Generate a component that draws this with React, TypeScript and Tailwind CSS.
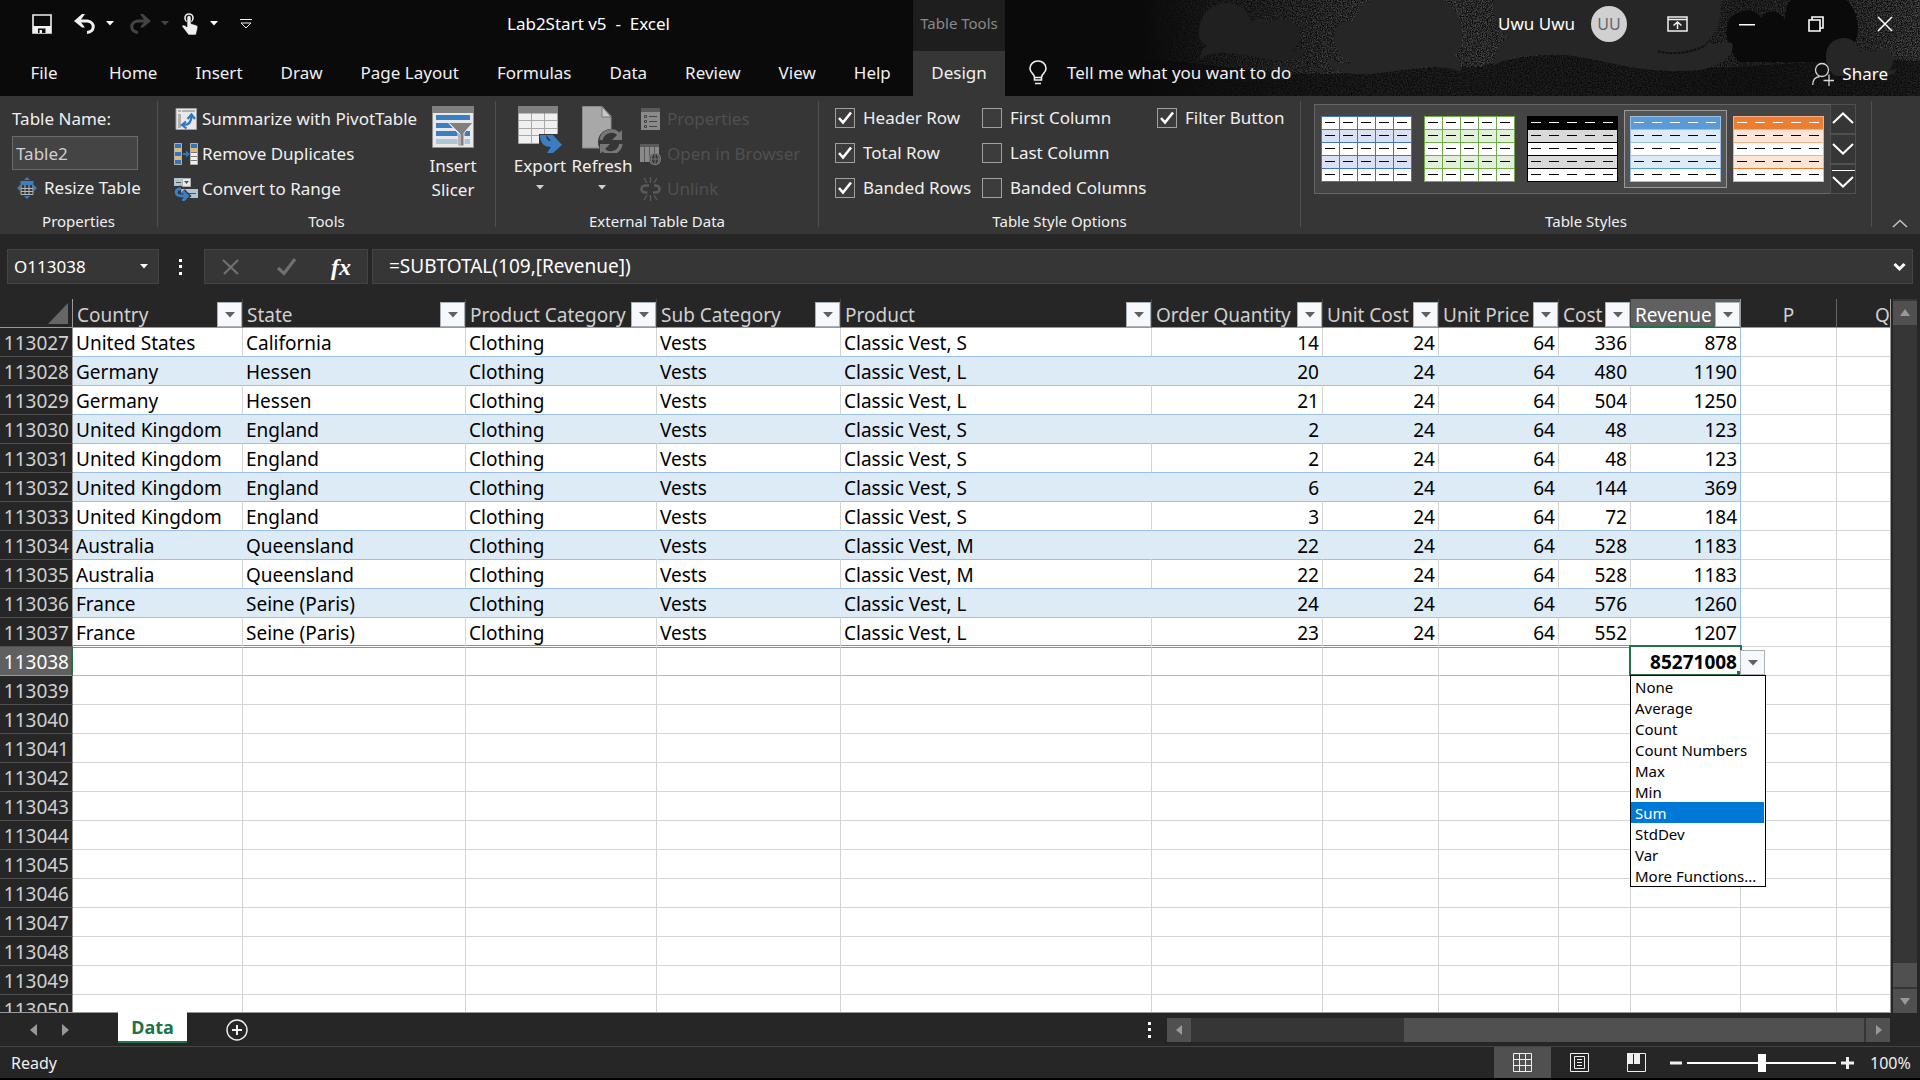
import { useState } from 'react';
import type { ReactNode } from 'react';

const TABS = ['Home', 'Insert', 'Draw', 'Page Layout', 'Formulas', 'Data', 'Review', 'View', 'Help'];

const COLUMNS = [
  { name: 'Country', width: 'w-[170px]' },
  { name: 'State', width: 'w-[223px]' },
  { name: 'Product Category', width: 'w-[191px]' },
  { name: 'Sub Category', width: 'w-[184px]' },
  { name: 'Product', width: 'w-[311px]' },
  { name: 'Order Quantity', width: 'w-[171px]' },
  { name: 'Unit Cost', width: 'w-[116px]' },
  { name: 'Unit Price', width: 'w-[120px]' },
  { name: 'Cost', width: 'w-[72px]' },
  { name: 'Revenue', width: 'w-[110px]' },
];

const FIRST_ROW = 113027;
const TOTAL_ROW = 113038;

const ROWS = [
  ['United States', 'California', 'S', 14, 336, 878],
  ['Germany', 'Hessen', 'L', 20, 480, 1190],
  ['Germany', 'Hessen', 'L', 21, 504, 1250],
  ['United Kingdom', 'England', 'S', 2, 48, 123],
  ['United Kingdom', 'England', 'S', 2, 48, 123],
  ['United Kingdom', 'England', 'S', 6, 144, 369],
  ['United Kingdom', 'England', 'S', 3, 72, 184],
  ['Australia', 'Queensland', 'M', 22, 528, 1183],
  ['Australia', 'Queensland', 'M', 22, 528, 1183],
  ['France', 'Seine (Paris)', 'L', 24, 576, 1260],
  ['France', 'Seine (Paris)', 'L', 23, 552, 1207],
].map(([country, state, size, qty, cost, revenue]) => [
  country, state, 'Clothing', 'Vests', `Classic Vest, ${size}`, qty, 24, 64, cost, revenue,
]);

const EMPTY_ROWS = Array.from({ length: 12 }, (_, i) => TOTAL_ROW + 1 + i);

const FUNCTIONS = ['None', 'Average', 'Count', 'Count Numbers', 'Max', 'Min', 'Sum', 'StdDev', 'Var', 'More Functions...'];

const STYLES = [
  { name: 'Blue grid', line: '#4472c4', head: '#ffffff', band: '#d9e1f2', dash: '#000000', under: '#4472c4', grid: true },
  { name: 'Green grid', line: '#70ad47', head: '#ffffff', band: '#e2efda', dash: '#000000', under: '#70ad47', grid: true },
  { name: 'Black', line: '#000000', head: '#000000', band: '#d9d9d9', dash: '#ffffff', under: '#000000', grid: false },
  { name: 'Blue', line: '#9bc2e6', head: '#5b9bd5', band: '#ddebf7', dash: '#ffffff', under: '#5b9bd5', grid: false },
  { name: 'Orange', line: '#f4b084', head: '#ed7d31', band: '#fce4d6', dash: '#ffffff', under: '#ed7d31', grid: false },
];

function Caret({ className = 'fill-white' }: { className?: string }) {
  return (
    <svg width="8" height="5" viewBox="0 0 8 5" className={`shrink-0 ${className}`}>
      <path d="M0 0h8L4 4.6z" />
    </svg>
  );
}

/* ---------- Title bar ---------- */

function Artwork() {
  return (
    <svg className="absolute top-0 right-0" width="780" height="96" viewBox="1140 0 780 96">
      <defs>
        <filter id="grain" x="0" y="0" width="100%" height="100%">
          <feTurbulence type="fractalNoise" baseFrequency="0.8" numOctaves="2" seed="4" />
          <feColorMatrix values="0 0 0 0 0.16  0 0 0 0 0.16  0 0 0 0 0.16  2 0 0 0 -0.6" />
        </filter>
        <linearGradient id="fade">
          <stop offset="0" stopColor="#0a0a0a" />
          <stop offset="0.1" stopColor="#0a0a0a" stopOpacity="0.7" />
          <stop offset="0.3" stopColor="#0a0a0a" stopOpacity="0.25" />
          <stop offset="0.62" stopColor="#0a0a0a" stopOpacity="0.3" />
          <stop offset="0.78" stopColor="#0a0a0a" stopOpacity="0.6" />
          <stop offset="0.93" stopColor="#0a0a0a" stopOpacity="0.4" />
          <stop offset="1" stopColor="#0a0a0a" stopOpacity="0.2" />
        </linearGradient>
      </defs>
      <rect x="1140" width="780" height="96" fill="#0a0a0a" />
      <rect x="1140" width="780" height="96" filter="url(#grain)" />
      <rect x="1140" width="780" height="96" fill="url(#fade)" />
      <path fill="#0a0a0a" fillOpacity="0.6" d="M1140 96V60c60 0 100 14 190 14 60-2 90-8 150-7 60-20 120-12 180-2 70 10 150-10 260-4v35z" />
      <path fill="#0a0a0a" d="M1785 20C1785-5 1800-10 1822-10S1858 8 1858 28C1858 50 1840 62 1820 62H1740C1725 50 1722 20 1735 14 1750 8 1755 10 1761 18 1768 8 1780 10 1785 20z" />
      <path fill="#202020" d="M1199 30C1201 12 1213 3 1227 3 1241 3 1251 13 1251 24 1255 17 1267 17 1269 23 1283 14 1300 22 1300 35 1300 44 1296 49 1289 52 1296 50 1302 48 1305 50 1306 58 1290 61 1277 60 1258 59 1246 53 1225 53 1211 53 1204 55 1200 60 1200 53 1203 48 1207 46 1201 42 1198 37 1199 30z" />
      <path fill="#262626" d="M1334 36C1334 24 1344 19 1353 22 1355 12 1364 5 1371 0H1442C1455 6 1462 20 1462 36 1462 46 1460 50 1455 56 1460 60 1461 66 1461 72 1452 68 1445 67 1432 67 1400 68 1380 76 1354 74 1338 73 1328 66 1326 60 1334 58 1342 66 1352 63 1341 58 1334 48 1334 36z" />
      <path fill="#262626" d="M1493 0H1721C1721 22 1716 34 1705 44 1718 44 1726 41 1732 43 1736 54 1722 66 1700 70 1670 73 1640 70 1610 63 1580 56 1560 53 1535 55 1515 56 1502 60 1493 66 1493 54 1499 43 1509 37 1497 30 1493 18 1493 0z" />
      <path fill="none" stroke="#101010" strokeWidth="2" strokeDasharray="3 1" d="M1658 51C1668 55 1690 54 1706 45" />
      <path fill="#262626" d="M1826 56C1826 44 1835 38 1844 38 1853 38 1859 45 1860 53 1864 48 1871 49 1872 54 1880 45 1894 50 1893 61 1893 65 1891 68 1888 71L1896 69C1896 74 1890 76 1880 76H1836C1829 72 1826 66 1826 56z" />
    </svg>
  );
}

function QuickAccess() {
  return (
    <div className="flex h-[51px] w-[507px] items-center pl-8">
      <button aria-label="Save" className="w-[42px]">
        <svg width="20" height="20" viewBox="0 0 20 20">
          <path fill="none" stroke="#f0f0f0" strokeWidth="1.6" d="M1 1h18v18H1z" />
          <path fill="#f0f0f0" d="M1 12h18v7H1z" />
          <path fill="#0a0a0a" d="M6 14.500h7.500V19H6z" />
          <path fill="#f0f0f0" d="M7.500 16h2.500v3H7.500z" />
        </svg>
      </button>
      <button aria-label="Undo" className="flex w-[55px] items-center gap-2.5">
        <svg width="22" height="20" viewBox="0 0 22 20">
          <path fill="none" stroke="#f0f0f0" strokeWidth="3" d="M3 7h10.500c8 1 7.500 11-.500 11.500" />
          <path fill="#f0f0f0" d="M0 7l8-7h3L6 7l5 6.500H8z" />
        </svg>
        <Caret />
      </button>
      <button aria-label="Redo" className="flex w-[53px] items-center gap-2.5">
        <svg width="22" height="20" viewBox="0 0 22 20">
          <path fill="none" stroke="#444" strokeWidth="3" d="M19 7H8.500c-8 1-7.500 11 .500 11.500" />
          <path fill="#444" d="M22 7l-8-7h-3l5 7-5 6.500h3z" />
        </svg>
        <Caret className="fill-[#444]" />
      </button>
      <button aria-label="Touch/Mouse Mode" className="flex w-[58px] items-center gap-3">
        <svg width="16" height="22" viewBox="0 0 16 22">
          <circle cx="7" cy="5" r="4" fill="none" stroke="#f0f0f0" strokeWidth="1.6" />
          <path fill="#f0f0f0" stroke="#0a0a0a" strokeWidth="0.6" d="M5 4.500c0-2.500 4-2.500 4 0v6l5 1.500c2 .6 2 2 1.500 4L14 22H6.500L0 13.500c0-1.500 1.500-2 3-1l2 1.500z" />
        </svg>
        <Caret />
      </button>
      <button aria-label="Customize Quick Access Toolbar">
        <svg width="12" height="10" viewBox="0 0 12 10" fill="none" stroke="#f0f0f0">
          <path d="M0 .5h12M1 4l5 5 5-5z" />
        </svg>
      </button>
    </div>
  );
}

function WindowControls() {
  return (
    <div className="flex flex-1 items-center justify-end text-white">
      <span>Uwu Uwu</span>
      <span className="ml-4 flex size-9 items-center justify-center rounded-full bg-[#d0d0d0] text-base text-[#606870]">UU</span>
      <button aria-label="Ribbon Display Options" className="ml-10 w-[21px]">
        <svg width="21" height="16" viewBox="0 0 21 16" fill="none" stroke="#f0f0f0" strokeWidth="1.500">
          <path d="M1 1h19v14H1zM1 3.500h19M10.500 13V6.500M6.500 9.500l4-3.500 4 3.500" />
        </svg>
      </button>
      <button aria-label="Minimize" className="ml-[51px] w-4">
        <svg width="16" height="16" viewBox="0 0 16 16"><path fill="#fff" d="M0 8h16v1.500H0z" /></svg>
      </button>
      <button aria-label="Restore" className="ml-[53px] w-4">
        <svg width="16" height="16" viewBox="0 0 16 16" fill="none" stroke="#fff" strokeWidth="1.600">
          <path d="M1 4h11v11H1zM4 4V1h11v11h-3" />
        </svg>
      </button>
      <button aria-label="Close" className="mr-[27px] ml-[53px] w-4">
        <svg width="16" height="16" viewBox="0 0 16 16" stroke="#fff" strokeWidth="1.500">
          <path d="M1 1l14 14M15 1L1 15" />
        </svg>
      </button>
    </div>
  );
}

function TitleBar() {
  return (
    <header className="relative bg-[#0a0a0a]">
      <Artwork />
      <div className="relative flex h-[51px] items-center pb-1">
        <div className="flex w-[913px] items-center">
          <QuickAccess />
          <span className="whitespace-pre text-white">Lab2Start v5  -  Excel</span>
        </div>
        <div className="-mb-1 flex h-[51px] w-[92px] items-center justify-center bg-[#1e1e1e] pb-1 text-[15px] text-[#8a8a8a]">Table Tools</div>
        <WindowControls />
      </div>
      <div className="relative flex h-[45px] items-stretch text-[#f0f0f0]">
        <nav className="flex w-[913px] pb-0.5">
          <button className="mr-0.5 w-[88px]">File</button>
          {TABS.map((tab) => (
            <button key={tab} className="px-[19px]">{tab}</button>
          ))}
        </nav>
        <button className="w-[92px] bg-[#363636] pb-0.5">Design</button>
        <button className="ml-6 flex items-center gap-5 pb-0.5">
          <svg width="18" height="25" viewBox="0 0 18 25" fill="none" stroke="#f0f0f0" strokeWidth="1.600">
            <path d="M5.500 20v-3C5 14 1 12.500 1 8.500 1 4 4.500 1 9 1s8 3 8 7.500c0 4-4 5.500-4.500 8.500v3zM5.500 17.500h7M6 23.500h6" />
          </svg>
          Tell me what you want to do
        </button>
        <button className="mr-8 ml-auto flex items-center gap-2 text-white">
          <svg width="22" height="24" viewBox="0 0 22 24" fill="none" stroke="#d8d8d8" strokeWidth="1.300">
            <circle cx="10" cy="8" r="6.500" />
            <path d="M.7 23c0-5 3-8 7-8.500M17 12.500V24M11.500 18.500H22" />
          </svg>
          Share
        </button>
      </div>
    </header>
  );
}

/* ---------- Ribbon ---------- */

function Group({ label, width, children }: { label: string; width: string; children: ReactNode }) {
  return (
    <>
      <section aria-label={label} className={`flex shrink-0 flex-col ${width}`}>
        <div className="flex h-[111px] pt-[5px]">{children}</div>
        <div className="pt-[3px] text-center text-[15px] leading-[22px]">{label}</div>
      </section>
      <div className="mt-[5px] h-[126px] w-px shrink-0 bg-[#505050]" />
    </>
  );
}

function SmallButton({ icon, label, dim = false }: { icon: ReactNode; label: string; dim?: boolean }) {
  return (
    <button disabled={dim} className={`flex h-[35px] items-center whitespace-nowrap ${dim ? 'gap-1.5 text-[#505050]' : 'gap-1'}`}>
      {icon}
      {label}
    </button>
  );
}

function Check({ label, on = false }: { label: string; on?: boolean }) {
  const [checked, setChecked] = useState(on);
  return (
    <label className="flex h-[35px] items-center gap-2 whitespace-nowrap">
      <span className="grid size-5">
        <input
          type="checkbox"
          checked={checked}
          onChange={(e) => setChecked(e.target.checked)}
          className="col-start-1 row-start-1 size-5 appearance-none border border-[#a0a0a0] bg-[#3c3c3c]"
        />
        {checked && (
          <svg width="20" height="20" viewBox="0 0 20 20" className="pointer-events-none col-start-1 row-start-1" fill="none" stroke="#fff" strokeWidth="2.600">
            <path d="M4 10l4 4.500L16 4.500" />
          </svg>
        )}
      </span>
      {label}
    </label>
  );
}

function StyleThumb({ style }: { style: (typeof STYLES)[number] }) {
  return (
    <svg width="91" height="66" viewBox="0 0 91 66" shapeRendering="crispEdges">
      <rect width="91" height="66" fill={style.line} />
      {[0, 1, 2, 3, 4].map((r) => (
        <rect key={r} x="1" y={1 + r * 13} width="89" height="12" fill={r === 0 ? style.head : r % 2 ? style.band : '#fff'} />
      ))}
      <rect x="0" y="52" width="91" height="1" fill={style.under} />
      {style.grid && [18, 36, 54, 72].map((x) => <rect key={x} x={x} y="0" width="1" height="66" fill={style.line} />)}
      {[0, 1, 2, 3, 4].map((r) =>
        [0, 1, 2, 3, 4].map((c) => (
          <rect key={`${r}-${c}`} x={4 + c * 18} y={6 + r * 13} width="10" height="1" fill={r === 0 ? style.dash : '#000'} />
        )),
      )}
    </svg>
  );
}

const ResizeIcon = (
  <svg width="20" height="22" viewBox="0 0 20 22">
    <path fill="#3a7ec4" d="M10 0l3 3H7zM10 22l3-3H7zM0 11l3-3v6zM20 11l-3-3v6zM3.500 4h13v4h-13z" />
    <path fill="none" stroke="#b8b8b8" d="M4 8v9.500h12V8M8 8v9.500M12 8v9.500M4 11.500h12M4 14.500h12" />
  </svg>
);

const PivotIcon = (
  <svg width="24" height="24" viewBox="0 0 24 24">
    <path fill="#e8e8e8" stroke="#a0a0a0" d="M2 1.500h20.500v21H2z" />
    <path fill="#b0b0b0" d="M4 3h3v2H4zM8 3h13v2H8zM4 7h3v14H4z" />
    <path fill="none" stroke="#2f75c0" strokeWidth="2.200" d="M9.500 18c5 0 8-3 8-9M13.500 12l4-4.500 3.500 4.500M12 14.500l-4 3.500 4.500 3.500" />
  </svg>
);

const DuplicatesIcon = (
  <svg width="24" height="24" viewBox="0 0 24 24">
    <path fill="#f0f0f0" stroke="#b0b0b0" d="M.5 1.500h7v21h-7zM16.500 1.500h7v21h-7z" />
    <path fill="#2f75c0" d="M1 2h6v4.500H1zM1 10h6v4H1zM1 18h6v4H1zM17 2h6v4h-6zM9 11h3V8.500l4 3.500-4 3.500V13H9z" />
    <path fill="#e0b878" d="M1 6h6v4H1zM1 14h6v4H1zM17 6h6v4h-6z" />
    <path stroke="#777" d="M17 10.500h6M17 14.500h6M17 18.500h6" />
  </svg>
);

const ConvertIcon = (
  <svg width="24" height="24" viewBox="0 0 24 24">
    <path fill="#b0c4d8" d="M0 1h9v8H0zM7 12h17v9H7z" />
    <path fill="#e8e8e8" stroke="#b0b0b0" d="M8.500 1.500h8v8h-8z" />
    <path fill="#555" d="M2 5h5v1H2zM10 4h5l-2.500 3zM14 16h8v1h-8z" />
    <path fill="none" stroke="#363636" strokeWidth="5" d="M7 11c-7 1-6 8 1 8h5M9 14l5 5-5 5" />
    <path fill="none" stroke="#3a7ec4" strokeWidth="3" d="M7 11.500c-7 1-6 7.500 1 7.500h4M8.500 14l5 5-5 5" />
  </svg>
);

function Ribbon() {
  const [selected, setSelected] = useState(3);
  return (
    <div className="flex h-[138px] bg-[#363636] text-[#f0f0f0]">
      <Group label="Properties" width="w-[157px]">
        <div className="flex flex-col pl-3">
          <label htmlFor="table-name" className="flex h-[35px] items-center">Table Name:</label>
          <input id="table-name" defaultValue="Table2" className="h-[34px] w-[126px] border border-[#6a6a6a] bg-[#444] px-[3px] text-[#d0d0d0] outline-none" />
          <button className="flex h-9 items-center gap-[7px] pl-[5px] whitespace-nowrap">{ResizeIcon}Resize Table</button>
        </div>
      </Group>

      <Group label="Tools" width="w-[337px]">
        <div className="flex w-[265px] flex-col pl-4">
          <SmallButton icon={PivotIcon} label="Summarize with PivotTable" />
          <SmallButton icon={DuplicatesIcon} label="Remove Duplicates" />
          <SmallButton icon={ConvertIcon} label="Convert to Range" />
        </div>
        <button className="flex w-[60px] flex-col items-center gap-1 pt-[5px] leading-6">
          <svg width="42" height="44" viewBox="0 0 42 44">
            <path fill="#e8e8e8" stroke="#909090" d="M.5.5h41v41H.5z" />
            <path fill="#808080" d="M0 0h42v7H0z" />
            <path fill="#3a7ec4" d="M4 9h34v5H4zM4 17h20v5H4zM4 25h34v5H4z" />
            <path fill="#b0c4d8" d="M4 33h34v5H4z" />
            <path fill="#808080" stroke="#e8e8e8" d="M16 16.500h25L32 27v13h-6V27z" />
            <path stroke="#e8e8e8" fill="none" d="M18 18l10 10v11" />
          </svg>
          <span>Insert<br />Slicer</span>
        </button>
      </Group>

      <Group label="External Table Data" width="w-[322px]">
        <button className="ml-4 flex w-[56px] flex-col items-center gap-px pt-[5px] leading-6">
          <svg width="46" height="47" viewBox="0 0 46 47">
            <path fill="#f0f0f0" d="M1 0h40v37H1z" />
            <path fill="none" stroke="#a8a8a8" d="M1.500 7v30.500h39V7M14.500 7v30M27.500 7v30M1 14.500h40M1 22.500h40M1 29.500h40" />
            <path fill="#808080" d="M1 0h40v7.500H1z" />
            <path fill="#363636" d="M22 28h24v19H22z" />
            <path fill="#3a7ec4" d="M23 29c0 9 5 12 11 12l-4 6h6l9-8-9-10h-7l5 6c-3 0-5-2-5-6z" />
          </svg>
          Export
          <Caret className="mt-1.5 fill-[#d0d0d0]" />
        </button>
        <button className="flex w-[68px] flex-col items-center gap-px pt-[5px] leading-6">
          <svg width="42" height="47" viewBox="0 0 42 47">
            <path fill="#a8a8a8" stroke="#8a8a8a" d="M1.500.5H21l9 9.500v32h-28.500z" />
            <path fill="#c8c8c8" stroke="#777" d="M21 .5V11h9z" />
            <circle cx="30" cy="36" r="13" fill="#363636" />
            <path fill="none" stroke="#777" strokeWidth="3.500" d="M20 34c2-10 14-12 19-4M40 38c-2 10-14 12-19 4" />
            <path fill="#777" d="M41 24v10H31zM19 48V38h10z" />
          </svg>
          Refresh
          <Caret className="mt-1.5 fill-[#d0d0d0]" />
        </button>
        <div className="flex flex-col pl-1">
          <SmallButton
            dim
            label="Properties"
            icon={
              <svg width="21" height="24" viewBox="0 0 21 24">
                <path fill="#8a8a8a" d="M1 1h19v22H1z" />
                <path fill="#5a5a5a" d="M1 1h19v4H1z" />
                <path stroke="#444" fill="none" d="M9 9.500h8M9 14.500h8M9 19.500h8M4.500 8.500h2v2h-2zM4.500 13.500h2v2h-2zM4.500 18.500h2v2h-2z" />
              </svg>
            }
          />
          <SmallButton
            dim
            label="Open in Browser"
            icon={
              <svg width="21" height="24" viewBox="0 0 21 24">
                <path fill="#8a8a8a" d="M0 2h19v18H0z" />
                <path fill="#5a5a5a" d="M0 2h19v3H0z" />
                <path stroke="#5a5a5a" d="M4.500 5v15M9.500 5v15M14.500 5v10" />
                <circle cx="15" cy="17" r="5.500" fill="#363636" stroke="#777" strokeWidth="1.400" />
                <path stroke="#777" fill="none" d="M9.500 17h11M15 11.500v11M12.500 13c-1.500 2.500-1.500 6 0 8M17.500 13c1.500 2.500 1.500 6 0 8" />
              </svg>
            }
          />
          <SmallButton
            dim
            label="Unlink"
            icon={
              <svg width="21" height="24" viewBox="0 0 21 24" fill="none" stroke="#5a5a5a">
                <path strokeWidth="2.600" d="M9 8.500H6c-6 0-6 7 0 7h1.500M13 15.500h2c6 0 6-7 0-7h-1" />
                <path strokeWidth="1.400" d="M10.500 0v6M4 1l3 5M17 1l-3 5M10.500 24v-6M4 23l3-5M17 23l-3-5" />
              </svg>
            }
          />
        </div>
      </Group>

      <Group label="Table Style Options" width="w-[481px]">
        <div className="-mt-px flex pl-4">
          <div className="w-[147px]">
            <Check label="Header Row" on />
            <Check label="Total Row" on />
            <Check label="Banded Rows" on />
          </div>
          <div className="w-[175px]">
            <Check label="First Column" />
            <Check label="Last Column" />
            <Check label="Banded Columns" />
          </div>
          <div>
            <Check label="Filter Button" on />
          </div>
        </div>
      </Group>

      <Group label="Table Styles" width="w-[570px]">
        <div className="mt-[3px] ml-[13px] flex h-[90px]">
          <div className="flex items-center border border-r-0 border-[#666] bg-[#444]">
            {STYLES.map((style, i) => (
              <button
                key={style.name}
                aria-label={style.name}
                onClick={() => setSelected(i)}
                className={`flex h-[78px] w-[103px] items-center justify-center border ${
                  i === selected ? 'border-[#999] bg-[#555]' : 'border-transparent'
                }`}
              >
                <StyleThumb style={style} />
              </button>
            ))}
          </div>
          <div className="flex w-[26px] flex-col divide-y-2 divide-[#505050] border border-[#505050]">
            {['M1 13l10-9.500L21 13', 'M1 4l10 9.500L21 4', 'M0 0h23M1 7l10 9.500L21 7'].map((d) => (
              <button key={d} aria-label="Scroll styles" className="flex flex-1 items-center justify-center">
                <svg width="23" height="18" viewBox="0 0 23 18" fill="none" stroke="#fff" strokeWidth="2"><path d={d} /></svg>
              </button>
            ))}
          </div>
        </div>
      </Group>

      <button aria-label="Collapse the Ribbon" className="mr-3 mb-1.5 ml-auto self-end">
        <svg width="16" height="9" viewBox="0 0 16 9" fill="none" stroke="#c0c0c0" strokeWidth="1.600"><path d="M1 8l7-6.500L15 8" /></svg>
      </button>
    </div>
  );
}

function Dots() {
  return (
    <svg width="3" height="16" viewBox="0 0 3 16" fill="#fff" shapeRendering="crispEdges">
      <path d="M0 0h3v3H0zM0 6h3v3H0zM0 13h3v3H0z" />
    </svg>
  );
}

function FormulaBar() {
  return (
    <div className="flex h-[65px] items-center bg-[#262626] px-[7px] text-white">
      <div className="flex h-[35px] w-[152px] items-center border border-[#444] bg-[#363636] pr-2.5">
        <input aria-label="Name Box" defaultValue="O113038" className="min-w-0 flex-1 bg-transparent pl-1.5 outline-none" />
        <Caret />
      </div>
      <div className="flex w-[45px] justify-center pr-0.5"><Dots /></div>
      <div className="flex h-[35px] w-[164px] items-center border border-[#444] bg-[#363636] pl-[17px]">
        <button aria-label="Cancel" className="w-[55px]">
          <svg width="18" height="18" viewBox="0 0 18 18" fill="none" stroke="#707070" strokeWidth="2.200"><path d="M1 2l15 14M16 2L2 16" /></svg>
        </button>
        <button aria-label="Enter" className="w-[54px]">
          <svg width="20" height="18" viewBox="0 0 20 18" fill="none" stroke="#707070" strokeWidth="3.200"><path d="M1 10l6 5.500L18 1" /></svg>
        </button>
        <button aria-label="Insert Function" className="font-['Liberation_Serif',serif] text-[24px] font-bold italic">fx</button>
      </div>
      <div className="ml-1 flex h-[35px] flex-1 items-center border border-[#444] bg-[#363636] pr-1.5">
        <input aria-label="Formula" defaultValue="=SUBTOTAL(109,[Revenue])" className="flex-1 bg-transparent pl-4 text-[19px] outline-none" />
        <svg width="13" height="10" viewBox="0 0 13 10" fill="none" stroke="#fff" strokeWidth="3"><path d="M1.500 2l5 5 5-5" /></svg>
      </div>
    </div>
  );
}

/* ---------- Sheet ---------- */

function RowHead({ n, active = false }: { n: number; active?: boolean }) {
  return (
    <th
      scope="row"
      className={`border-b p-0 pt-0.5 text-right font-normal ${
        active
          ? 'border-r-2 border-r-[#217346] border-b-[#999] bg-[#606060] pr-0.5 text-white'
          : 'border-r border-r-[#999] border-b-[#505050] bg-[#262626] pr-[3px] text-[#d0d0d0]'
      }`}
    >
      {n}
    </th>
  );
}

function FilterButton({ label }: { label: string }) {
  return (
    <button aria-label={label} className="flex size-[25px] shrink-0 items-center justify-center border border-[#a8b0b8] bg-[#f6f8fb]">
      <svg width="10" height="6" viewBox="0 0 10 6"><path fill="#606060" d="M0 0h10L5 5.500z" /></svg>
    </button>
  );
}

function TotalCell() {
  const [fn, setFn] = useState('Sum');
  return (
    <td className="relative border-r border-b border-[#d4d4d4] bg-white p-0 pt-0.5 pr-[3px] text-right font-bold">
      85271008
      <div className="pointer-events-none absolute -inset-x-0.5 -top-0.5 -bottom-px border-2 border-[#217346]" />
      <div className="pointer-events-none absolute -right-0.5 -bottom-px size-[5px] bg-[#217346]" />
      <div className="absolute top-[3px] left-full">
        <FilterButton label="Total function" />
      </div>
      <ul role="listbox" aria-label="Total function" className="absolute top-full -left-px z-10 w-[136px] border border-black bg-white text-left font-normal">
        {FUNCTIONS.map((f) => (
          <li key={f} role="option" aria-selected={f === fn}>
            <button
              onClick={() => setFn(f)}
              className={`block h-[21px] w-[133px] pl-1 text-left text-[15px] leading-5 whitespace-nowrap ${f === fn ? 'bg-[#0078d7] text-white' : ''}`}
            >
              {f}
            </button>
          </li>
        ))}
      </ul>
    </td>
  );
}

function Sheet() {
  return (
    <div className="min-w-0 flex-1 overflow-hidden border-r border-b border-[#999] bg-white">
      <table className="w-full table-fixed border-separate border-spacing-0 text-[19px] leading-6 text-black [&_td]:whitespace-nowrap">
        <colgroup>
          <col className="w-[73px]" />
          {COLUMNS.map((c) => <col key={c.name} className={c.width} />)}
          <col className="w-[96px]" />
          <col />
        </colgroup>
        <thead className="bg-[#262626] text-[#d0d0d0]">
          <tr className="h-[29px]">
            <th className="border-r border-b border-[#999] p-0 pr-1">
              <svg width="20" height="21" viewBox="0 0 20 21" className="ml-auto"><path fill="#666" d="M20 0v21H0z" /></svg>
            </th>
            {COLUMNS.map((c) => {
              const active = c.name === 'Revenue';
              return (
                <th
                  key={c.name}
                  scope="col"
                  className={`p-0 align-bottom font-normal ${
                    active
                      ? 'border-r border-b border-r-[#999] border-b-[#217346] bg-[#606060] text-white shadow-[inset_0_-1px_0_#217346]'
                      : 'border-r border-b border-r-[#444] border-b-[#999]'
                  }`}
                >
                  <div className="flex items-end justify-between">
                    <span className="pl-1 whitespace-nowrap">{c.name}</span>
                    <FilterButton label={`Filter ${c.name}`} />
                  </div>
                </th>
              );
            })}
            <th scope="col" className="border-r border-b border-r-[#666] border-b-[#999] p-0 align-bottom font-normal">P</th>
            <th scope="col" className="overflow-hidden border-b border-[#999] p-0 pl-[38px] text-left align-bottom font-normal">Q</th>
          </tr>
        </thead>
        <tbody>
          {ROWS.map((row, r) => {
            const band = r % 2 === 1;
            const last = r === ROWS.length - 1;
            return (
              <tr key={r} className="h-[29px]">
                <RowHead n={FIRST_ROW + r} />
                {row.map((value, c) => (
                  <td
                    key={c}
                    className={`border-r border-b p-0 pt-0.5 ${c > 4 ? 'pr-[3px] text-right' : 'pl-[3px]'} ${
                      last ? 'border-b-white shadow-[inset_0_-1px_0_#5b9bd5]' : 'border-b-[#9bc2e6]'
                    } ${band ? 'bg-[#ddebf7]' : ''} ${c === 9 ? 'border-r-[#9bc2e6]' : band ? 'border-r-[#ddebf7]' : 'border-r-[#d4d4d4]'}`}
                  >
                    {value}
                  </td>
                ))}
                <td className="border-r border-b border-[#d4d4d4]" />
                <td className="border-b border-[#d4d4d4]" />
              </tr>
            );
          })}
          <tr className="h-[29px]">
            <RowHead n={TOTAL_ROW} active />
            {COLUMNS.slice(0, 9).map((c) => (
              <td key={c.name} className="border-t border-r border-b border-t-[#5b9bd5] border-r-[#d4d4d4] border-b-[#9bc2e6]" />
            ))}
            <TotalCell />
            <td className="border-r border-b border-[#d4d4d4]" />
            <td className="border-b border-[#d4d4d4]" />
          </tr>
          {EMPTY_ROWS.map((n) => (
            <tr key={n} className="h-[29px]">
              <RowHead n={n} />
              {COLUMNS.map((c) => <td key={c.name} className="border-r border-b border-[#d4d4d4]" />)}
              <td className="border-r border-b border-[#d4d4d4]" />
              <td className="border-b border-[#d4d4d4]" />
            </tr>
          ))}
        </tbody>
      </table>
    </div>
  );
}

function ScrollButton({ d, label }: { d: string; label: string }) {
  return (
    <button aria-label={label} className="flex size-6 shrink-0 items-center justify-center bg-[#505050]">
      <svg width="12" height="12" viewBox="0 0 12 12" fill="#999"><path d={d} /></svg>
    </button>
  );
}

function SheetTabs() {
  return (
    <div className="flex h-[33px] shrink-0 items-center bg-[#262626]">
      <button aria-label="Previous sheet" className="ml-[30px] w-8">
        <svg width="7" height="12" viewBox="0 0 7 12" fill="#999"><path d="M7 0v12L0 6z" /></svg>
      </button>
      <button aria-label="Next sheet" className="w-[56px]">
        <svg width="7" height="12" viewBox="0 0 7 12" fill="#999"><path d="M0 0v12l7-6z" /></svg>
      </button>
      <button className="-mt-px h-[31px] w-[69px] self-start border-b-2 border-[#217346] bg-white text-lg font-bold text-[#217346]">Data</button>
      <button aria-label="New sheet" className="ml-[39px]">
        <svg width="22" height="22" viewBox="0 0 22 22" fill="none" stroke="#f0f0f0"><circle cx="11" cy="11" r="10" strokeWidth="1.400" /><path strokeWidth="2" d="M6 11h10M11 6v10" /></svg>
      </button>
      <div className="mr-[30px] ml-auto flex w-[742px] items-center">
        <Dots />
        <div className="ml-4 flex h-6 flex-1 bg-[#363636]">
          <ScrollButton label="Scroll left" d="M9 1v10L3 6z" />
          <div className="ml-auto mr-0.5 h-6 w-[460px] bg-[#505050]" />
          <ScrollButton label="Scroll right" d="M4 1v10l6-5z" />
        </div>
      </div>
    </div>
  );
}

function StatusBar() {
  return (
    <footer className="flex h-[34px] shrink-0 items-stretch border-t border-b-2 border-t-[#444] border-b-black bg-[#262626] text-[#f0f0f0]">
      <span className="flex flex-1 items-center pl-[11px] text-base">Ready</span>
      <button aria-label="Normal" className="flex w-[57px] items-center justify-center bg-[#505050]">
        <svg width="19" height="19" viewBox="0 0 19 19" fill="none" stroke="#f0f0f0"><path d="M.5.5h18v18H.5zM6.500 0v19M12.500 0v19M0 6.500h19M0 12.500h19" /></svg>
      </button>
      <button aria-label="Page Layout" className="flex w-[57px] items-center justify-center">
        <svg width="19" height="19" viewBox="0 0 19 19" fill="none" stroke="#f0f0f0"><path d="M.5.5h18v18H.5zM4.500 3.500h10v12h-10zM7 6.500h5M7 9.500h5M7 12.500h5" /></svg>
      </button>
      <button aria-label="Page Break Preview" className="flex w-[57px] items-center justify-center">
        <svg width="19" height="19" viewBox="0 0 19 19"><path fill="none" stroke="#f0f0f0" d="M.5.5h18v18H.5z" /><path fill="#f0f0f0" d="M0 0h6v11H0zM7 0h6v11H7z" /></svg>
      </button>
      <div className="flex w-[255px] items-center pl-[5px]">
        <button aria-label="Zoom out"><svg width="12" height="12" viewBox="0 0 12 12"><path fill="#f0f0f0" d="M0 4.500h12v3H0z" /></svg></button>
        <input
          type="range"
          aria-label="Zoom"
          defaultValue="50"
          className="mx-[5px] h-[18px] w-[149px] appearance-none bg-transparent [&::-webkit-slider-runnable-track]:h-0.5 [&::-webkit-slider-runnable-track]:bg-white [&::-webkit-slider-thumb]:-mt-2 [&::-webkit-slider-thumb]:h-[18px] [&::-webkit-slider-thumb]:w-2 [&::-webkit-slider-thumb]:appearance-none [&::-webkit-slider-thumb]:bg-white"
        />
        <button aria-label="Zoom in"><svg width="13" height="12" viewBox="0 0 13 12"><path fill="#f0f0f0" d="M0 4.500h13v3H0zM5 0h3v12H5z" /></svg></button>
        <span className="ml-4 text-base">100%</span>
      </div>
    </footer>
  );
}

export default function App() {
  return (
    <div className="flex h-screen flex-col bg-[#262626] font-['Noto_Sans','Open_Sans',sans-serif] text-[17px]">
      <TitleBar />
      <Ribbon />
      <FormulaBar />
      <main className="flex min-h-0 flex-1">
        <Sheet />
        <div className="mr-[3px] ml-0.5 flex flex-col bg-[#363636] pt-0.5">
          <ScrollButton label="Scroll up" d="M1 9h10L6 2z" />
          <div className="mt-auto mb-0.5 h-6 w-6 bg-[#505050]" />
          <ScrollButton label="Scroll down" d="M1 3h10l-5 7z" />
        </div>
      </main>
      <SheetTabs />
      <StatusBar />
    </div>
  );
}
